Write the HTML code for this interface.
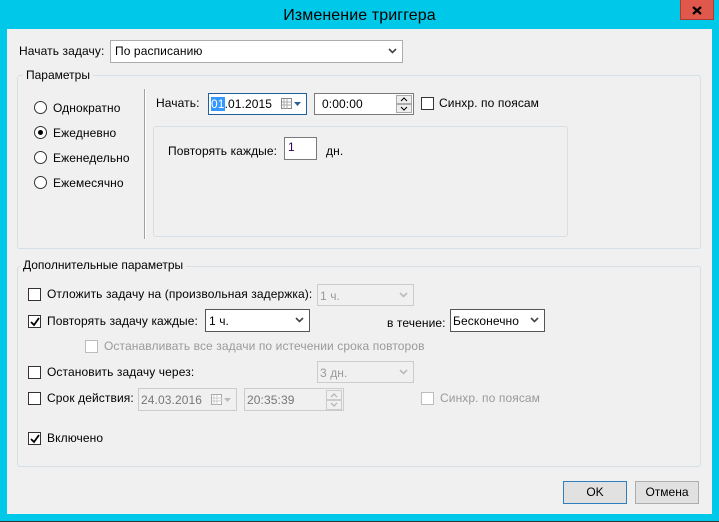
<!DOCTYPE html>
<html><head><meta charset="utf-8"><style>
*{box-sizing:border-box;margin:0;padding:0}
body{width:719px;height:522px;background:#00c8e8;position:relative;overflow:hidden;font-family:"Liberation Sans",sans-serif;font-size:12px;color:#000}
.a{position:absolute}
.t{position:absolute;white-space:nowrap;line-height:14px;letter-spacing:0.1px}
.client{left:7px;top:29px;width:705px;height:485px;background:#f0f0f0}
.grp{position:absolute;border:1px solid #d5dfe5;border-radius:3px}
.lbl{position:absolute;background:#f0f0f0;padding:0 3px;line-height:14px}
.box{position:absolute;background:#fff;border:1px solid #7a7a7a}
.dis{border-color:#ccc;background:#f0f0f0;color:#999}
.cb{position:absolute;width:13px;height:13px;border:1px solid #333;background:#fff}
.cb.d{border-color:#bcbcbc}
.rd{position:absolute;width:13px;height:13px;border:1px solid #333;border-radius:50%;background:#fff}
.arr{position:absolute;right:5px;top:7px}
.btn{position:absolute;height:23px;border:1px solid #adadad;background:#e1e1e1;text-align:center;line-height:20px}
</style></head><body>
<div class="t" style="left:0;width:719px;text-align:center;top:7px;font-size:16px;line-height:18px;color:#000">Изменение триггера</div>
<div class="a" style="left:680px;top:0;width:34px;height:20px;background:#e0584c;border:1px solid #b03a30;border-top:none"></div>
<svg class="a" style="left:692px;top:6px" width="10" height="9"><path d="M1 1L9 8M9 1L1 8" stroke="#000" stroke-width="2.2"/></svg>
<div class="a" style="left:0;top:521px;width:719px;height:1px;background:#333"></div>
<div class="a client"></div>

<div class="t" style="left:19px;top:44px">Начать задачу:</div>
<div class="box" style="left:110px;top:40px;width:293px;height:23px;border-color:#acacac"><div class="t" style="left:4px;top:3px">По расписанию</div>
<svg class="arr" width="9" height="6"><path d="M1 1L4.5 4.5L8 1" stroke="#444" stroke-width="1.6" fill="none"/></svg></div>

<div class="grp" style="left:17px;top:75px;width:684px;height:174px"></div>
<div class="lbl" style="left:23px;top:68px">Параметры</div>
<div class="rd" style="left:34px;top:101px"></div><div class="t" style="left:53px;top:101px">Однократно</div>
<div class="rd" style="left:34px;top:126px"><div class="a" style="left:3px;top:3px;width:5px;height:5px;border-radius:50%;background:#000"></div></div><div class="t" style="left:53px;top:126px">Ежедневно</div>
<div class="rd" style="left:34px;top:151px"></div><div class="t" style="left:53px;top:151px">Еженедельно</div>
<div class="rd" style="left:34px;top:176px"></div><div class="t" style="left:53px;top:176px">Ежемесячно</div>
<div class="a" style="left:144px;top:89px;width:2px;height:150px;background:#a0a0a0;border-right:1px solid #fff"></div>

<div class="t" style="left:156px;top:96px">Начать:</div>
<div class="box" style="left:208px;top:93px;width:99px;height:22px;border-color:#1f5f9f"><div class="t" style="left:2px;top:3px"><span style="background:#3399ff;color:#fff">01</span>.01.2015</div>
<svg class="a" style="left:72px;top:4px" width="22" height="12"><rect x="0.5" y="0.5" width="10" height="10" fill="#fff" stroke="#888"/><path d="M3 1v10M6 1v10M1 4h10M1 7h10" stroke="#aaa"/><path d="M13 4h7l-3.5 4z" fill="#2e5f9a"/></svg></div>
<div class="box" style="left:314px;top:93px;width:100px;height:22px"><div class="t" style="left:7px;top:3px">0:00:00</div>
<div class="a" style="left:81px;top:1px;width:16px;height:9px;border:1px solid #aaa;background:#eee"></div>
<div class="a" style="left:81px;top:10px;width:16px;height:9px;border:1px solid #aaa;background:#eee"></div>
<svg class="a" style="left:85px;top:3px" width="8" height="15"><path d="M1 4L4 1L7 4M1 10L4 13L7 10" stroke="#000" fill="none"/></svg></div>
<div class="cb" style="left:421px;top:97px"></div><div class="t" style="left:439px;top:96px">Синхр. по поясам</div>

<div class="grp" style="left:153px;top:126px;width:415px;height:111px"></div>
<div class="t" style="left:168px;top:144px">Повторять каждые:</div>
<div class="box" style="left:284px;top:137px;width:33px;height:23px"><div class="t" style="left:3px;top:2px;color:#300060">1</div></div>
<div class="t" style="left:326px;top:144px">дн.</div>

<div class="grp" style="left:17px;top:266px;width:684px;height:201px"></div>
<div class="lbl" style="left:20px;top:258px">Дополнительные параметры</div>

<div class="cb" style="left:28px;top:288px"></div><div class="t" style="left:47px;top:287px">Отложить задачу на (произвольная задержка):</div>
<div class="box dis" style="left:317px;top:284px;width:97px;height:22px"><div class="t" style="left:2px;top:4px;color:#999">1 ч.</div><svg class="arr" width="9" height="6"><path d="M1 1L4.5 4.5L8 1" stroke="#bbb" stroke-width="1.6" fill="none"/></svg></div>

<div class="cb" style="left:28px;top:315px"><svg class="a" style="left:1px;top:1px" width="10" height="10"><path d="M1 5L4 8L9 1" stroke="#000" stroke-width="1.8" fill="none"/></svg></div><div class="t" style="left:47px;top:314px">Повторять задачу каждые:</div>
<div class="box" style="left:205px;top:309px;width:105px;height:23px;border-color:#555"><div class="t" style="left:3px;top:4px">1 ч.</div><svg class="arr" width="9" height="6"><path d="M1 1L4.5 4.5L8 1" stroke="#444" stroke-width="1.6" fill="none"/></svg></div>
<div class="t" style="left:387px;top:316px">в течение:</div>
<div class="box" style="left:450px;top:309px;width:95px;height:23px;border-color:#555"><div class="t" style="left:2px;top:4px">Бесконечно</div><svg class="arr" width="9" height="6"><path d="M1 1L4.5 4.5L8 1" stroke="#444" stroke-width="1.6" fill="none"/></svg></div>

<div class="cb d" style="left:85px;top:340px"></div><div class="t" style="left:104px;top:339px;color:#9a9a9a">Останавливать все задачи по истечении срока повторов</div>

<div class="cb" style="left:28px;top:366px"></div><div class="t" style="left:47px;top:365px">Остановить задачу через:</div>
<div class="box dis" style="left:317px;top:361px;width:97px;height:22px"><div class="t" style="left:2px;top:4px;color:#999">3 дн.</div><svg class="arr" width="9" height="6"><path d="M1 1L4.5 4.5L8 1" stroke="#bbb" stroke-width="1.6" fill="none"/></svg></div>

<div class="cb" style="left:28px;top:392px"></div><div class="t" style="left:47px;top:391px">Срок действия:</div>
<div class="box dis" style="left:138px;top:388px;width:99px;height:23px"><div class="t" style="left:2px;top:4px;color:#777">24.03.2016</div>
<svg class="a" style="left:72px;top:5px" width="22" height="12"><rect x="0.5" y="0.5" width="10" height="10" fill="#fff" stroke="#aaa"/><path d="M3 1v10M6 1v10M1 4h10M1 7h10" stroke="#ccc"/><path d="M13 4h7l-3.5 4z" fill="#bbb"/></svg></div>
<div class="box dis" style="left:244px;top:388px;width:100px;height:23px"><div class="t" style="left:2px;top:4px;color:#777">20:35:39</div>
<div class="a" style="left:81px;top:1px;width:16px;height:10px;border:1px solid #ccc"></div><div class="a" style="left:81px;top:11px;width:16px;height:10px;border:1px solid #ccc"></div>
<svg class="a" style="left:85px;top:4px" width="8" height="15"><path d="M1 4L4 1L7 4M1 10L4 13L7 10" stroke="#aaa" fill="none"/></svg></div>
<div class="cb d" style="left:421px;top:392px"></div><div class="t" style="left:440px;top:391px;color:#9a9a9a">Синхр. по поясам</div>

<div class="cb" style="left:28px;top:432px"><svg class="a" style="left:1px;top:1px" width="10" height="10"><path d="M1 5L4 8L9 1" stroke="#000" stroke-width="1.8" fill="none"/></svg></div><div class="t" style="left:47px;top:431px">Включено</div>

<div class="btn" style="left:563px;top:481px;width:64px;border-color:#2f7fbf">OK</div>
<div class="btn" style="left:635px;top:481px;width:64px">Отмена</div>
</body></html>
